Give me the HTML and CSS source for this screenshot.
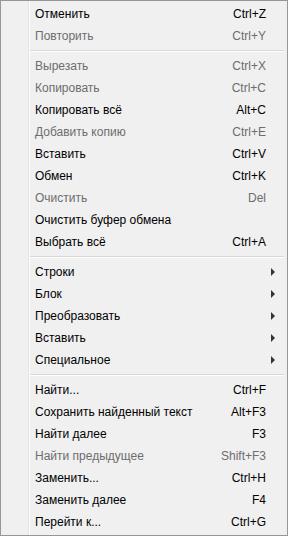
FILE: index.html
```html
<!DOCTYPE html>
<html lang="ru">
<head>
    <meta charset="UTF-8">
    <title>Меню</title>
    <link rel="stylesheet" href="styles.css">
</head>
<body>
    <div class="menu">
        <div class="item"><span class="label">Отменить</span><span class="key">Ctrl+Z</span></div>
        <div class="item off"><span class="label">Повторить</span><span class="key">Ctrl+Y</span></div>
        <div class="sep"></div>
        <div class="item off"><span class="label">Вырезать</span><span class="key">Ctrl+X</span></div>
        <div class="item off"><span class="label">Копировать</span><span class="key">Ctrl+C</span></div>
        <div class="item"><span class="label">Копировать всё</span><span class="key">Alt+C</span></div>
        <div class="item off"><span class="label">Добавить копию</span><span class="key">Ctrl+E</span></div>
        <div class="item"><span class="label">Вставить</span><span class="key">Ctrl+V</span></div>
        <div class="item"><span class="label">Обмен</span><span class="key">Ctrl+K</span></div>
        <div class="item off"><span class="label">Очистить</span><span class="key">Del</span></div>
        <div class="item"><span class="label">Очистить буфер обмена</span><span class="key"></span></div>
        <div class="item"><span class="label">Выбрать всё</span><span class="key">Ctrl+A</span></div>
        <div class="sep"></div>
        <div class="item sub"><span class="label">Строки</span><span class="key"></span></div>
        <div class="item sub"><span class="label">Блок</span><span class="key"></span></div>
        <div class="item sub"><span class="label">Преобразовать</span><span class="key"></span></div>
        <div class="item sub"><span class="label">Вставить</span><span class="key"></span></div>
        <div class="item sub"><span class="label">Специальное</span><span class="key"></span></div>
        <div class="sep"></div>
        <div class="item"><span class="label">Найти...</span><span class="key">Ctrl+F</span></div>
        <div class="item"><span class="label">Сохранить найденный текст</span><span class="key">Alt+F3</span></div>
        <div class="item"><span class="label">Найти далее</span><span class="key">F3</span></div>
        <div class="item off"><span class="label">Найти предыдущее</span><span class="key">Shift+F3</span></div>
        <div class="item"><span class="label">Заменить...</span><span class="key">Ctrl+H</span></div>
        <div class="item"><span class="label">Заменить далее</span><span class="key">F4</span></div>
        <div class="item"><span class="label">Перейти к...</span><span class="key">Ctrl+G</span></div>
    </div>
</body>
</html>
```

FILE: styles.css
```css
body {
    margin: 0;
    padding: 0;
    font-family: "Liberation Sans", Arial, sans-serif;
    font-size: 12px;
}

.menu {
    width: 288px;
    height: 536px;
    box-sizing: border-box;
    border: 1px solid #979797;
    padding: 2px;
    background-color: #f0f0f0;
    background-image: linear-gradient(to right, transparent 27px, #e2e3e3 27px, #e2e3e3 28px, #ffffff 28px, #ffffff 29px, transparent 29px);
    background-repeat: no-repeat;
}

.item {
    display: flex;
    align-items: center;
    height: 22px;
    padding-left: 32px;
    padding-right: 19px;
    padding-bottom: 1px;
    box-sizing: border-box;
    color: #000;
    position: relative;
}

.item.off {
    color: #6d6d6d;
}

.label {
    flex: 1;
    white-space: nowrap;
}

.key {
    white-space: nowrap;
}

.item.sub::after {
    content: "";
    position: absolute;
    right: 10px;
    top: 7px;
    border-left: 4px solid #333;
    border-top: 4px solid transparent;
    border-bottom: 4px solid transparent;
}

.sep {
    height: 8px;
    margin-left: 27px;
    margin-right: 1px;
    background: linear-gradient(to bottom, transparent 3px, #d7d7d7 3px, #d7d7d7 4px, #ffffff 4px, #ffffff 5px, transparent 5px);
}
```
